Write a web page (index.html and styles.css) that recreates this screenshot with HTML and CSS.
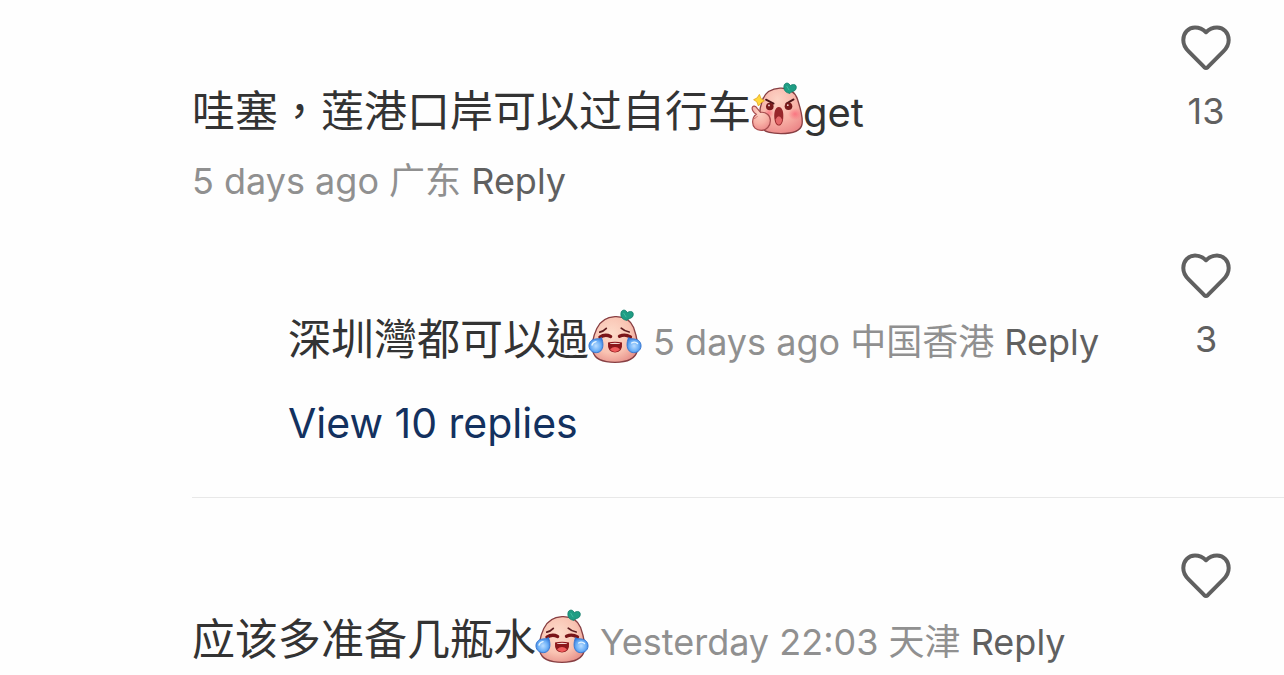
FILE: index.html
```html
<!DOCTYPE html>
<html lang="zh-Hant">
<head>
    <meta charset="UTF-8">
    <meta name="viewport" content="width=device-width, initial-scale=1.0">
    <title>Comments</title>
    <link rel="stylesheet" href="styles.css">
</head>
<body>
    <!-- Shared icons -->
    <svg class="sprite" aria-hidden="true">
        <defs>
            <radialGradient id="skin" cx="0.42" cy="0.38" r="0.7">
                <stop offset="0" stop-color="#fddccb"/>
                <stop offset="0.6" stop-color="#f9c3b2"/>
                <stop offset="1" stop-color="#e68e88"/>
            </radialGradient>
            <radialGradient id="skin-hot" cx="0.42" cy="0.25" r="0.85">
                <stop offset="0" stop-color="#fcd3c5"/>
                <stop offset="0.55" stop-color="#f8b1a6"/>
                <stop offset="1" stop-color="#ea8083"/>
            </radialGradient>
            <radialGradient id="blush">
                <stop offset="0" stop-color="#fb5f73" stop-opacity="0.7"/>
                <stop offset="1" stop-color="#fb5f73" stop-opacity="0"/>
            </radialGradient>
            <radialGradient id="tear" cx="0.5" cy="0.55" r="0.6">
                <stop offset="0" stop-color="#b9dcff"/>
                <stop offset="0.55" stop-color="#6fb2f8"/>
                <stop offset="1" stop-color="#2f78dc"/>
            </radialGradient>
        </defs>
        <symbol id="heart" viewBox="0 0 50 46">
            <path d="M25 7.2C21.6 3.9 17.8 2.5 14 2.5C7.2 2.5 2.3 8 2.3 15C2.3 19.6 4 22.8 7.6 26.4L23.3 42.2Q25 43.8 26.7 42.2L42.4 26.4C46 22.8 47.7 19.6 47.7 15C47.7 8 42.8 2.5 36 2.5C32.2 2.5 28.4 3.9 25 7.2Z" fill="none" stroke="#606060" stroke-width="4" stroke-linejoin="round"/>
        </symbol>
        <symbol id="leaf" viewBox="0 0 14 12">
            <path d="M4.6 10.8C1.4 9.6 0.5 6.6 1 3.8C1.3 1.2 4.4 0.2 6.2 2L7.3 3.6C9.2 2.2 11.8 2 12.9 3.6C13.8 5.4 13.2 8.4 10.6 9.2C9 9.8 8.2 10 7 11.4Z" fill="#1f9d84" stroke="#147d6b" stroke-width="0.8"/>
            <path d="M3.6 4L6.2 8.2" fill="none" stroke="#3dbb9f" stroke-width="1"/>
        </symbol>
        <symbol id="laugh-cry" viewBox="0 0 54 54">
            <path d="M27 7.6C36.5 7.2 42.6 11 45.6 18.5C48.2 26 50.8 35 49.2 42C47 51 37.5 53.3 27 53.3C16.5 53.3 7 51 4.9 42.5C3.4 35.5 5.6 26.5 8.8 19.5C12.4 11.8 18 8 27 7.6Z" fill="url(#skin)" stroke="#873f43" stroke-width="1.3"/>
            <use href="#leaf" x="32" y="0" width="14" height="12"/>
            <path d="M11.8 23.2Q15.5 22.3 18.3 19.4M33.2 19.2Q36.5 22.2 41.2 23" fill="none" stroke="#5e1d20" stroke-width="1.7" stroke-linecap="round"/>
            <path d="M12 28.2Q17 24.6 22.6 27.4M31.5 27.3Q37 24.6 42.4 28" fill="none" stroke="#7a1519" stroke-width="3.4" stroke-linecap="round"/>
            <path d="M20 33.6Q27 32 34 33.6Q35 43.3 27 43.6Q19.1 43.3 20 33.6Z" fill="#8c171b"/>
            <path d="M22 34.3Q27 33.4 32 34.3L31.6 35.1H22.4Z" fill="#f3d9d5"/>
            <path d="M22 40.2Q27 36 32 40.2Q30 43 27 43Q24 43 22 40.2Z" fill="#ef5b5b"/>
            <path d="M13.5 28.6C15.5 34 15.6 38.8 12.8 41.9C9.5 45 3.8 43.9 1.7 40C-0.4 35.8 2 31 6.3 30.2C9.3 29.6 11.6 30.2 13.5 28.6Z" fill="url(#tear)" stroke="#3475cf" stroke-width="0.9"/>
            <path d="M40.5 28.6C38.5 34 38.4 38.8 41.2 41.9C44.5 45 50.2 43.9 52.3 40C54.4 35.8 52 31 47.7 30.2C44.7 29.6 42.4 30.2 40.5 28.6Z" fill="url(#tear)" stroke="#3475cf" stroke-width="0.9"/>
            <path d="M4 36Q5 33 8 32.6M43.6 34Q47 32 49.5 34.6" fill="none" stroke="#e4f4ff" stroke-width="1.4" stroke-linecap="round"/>
        </symbol>
        <symbol id="shout" viewBox="0 0 54 54">
            <path d="M30 7.2C39.5 6.8 45 10.8 47.6 18.5C50 26.5 53.4 36 52 43.5C50.4 51 42 52.6 31 52.6C20 52.6 11.5 51 10.2 44C8.8 36 10 25.5 12.6 18.5C15.6 11 21.5 7.6 30 7.2Z" fill="url(#skin-hot)" stroke="#873f43" stroke-width="1.3"/>
            <use href="#leaf" x="33" y="1" width="14" height="12"/>
            <ellipse cx="45" cy="33" rx="7" ry="6" fill="url(#blush)"/>
            <ellipse cx="19" cy="32" rx="5" ry="5" fill="url(#blush)"/>
            <path d="M16 18.6L23.6 22.6M43.6 18.4L36.4 22.6" fill="none" stroke="#4d1519" stroke-width="1.8" stroke-linecap="round"/>
            <circle cx="19.8" cy="25.5" r="3.8" fill="#781a1c"/>
            <circle cx="38.5" cy="25.2" r="3.8" fill="#781a1c"/>
            <circle cx="19" cy="24.4" r="0.9" fill="#f6dcd8"/>
            <circle cx="37.8" cy="24.2" r="0.9" fill="#f6dcd8"/>
            <path d="M28.8 26C32.6 26 33.8 31.8 33.2 37.5C32.7 42.3 31 44.6 28.8 44.6C26.5 44.6 24.9 42 24.4 37.5C23.8 31.8 25.1 26 28.8 26Z" fill="#97262a"/>
            <path d="M25.6 38.5Q28.8 32 32.1 38.5Q31.5 43.6 28.8 43.7Q26.1 43.6 25.6 38.5Z" fill="#e5686a"/>
            <path d="M6.2 33.3C4.2 31.7 1.7 28.4 2.3 26.4C3 24.2 5.6 25 7.2 27.3L10.5 31.3C16 30.8 20.4 34.2 20.4 39.5C20.4 45 16.5 49.4 11.3 49.4C6 49.4 2.6 46 2.6 41C2.6 37.5 4 35 6.2 33.3Z" fill="url(#skin-hot)" stroke="#a74c4e" stroke-width="1.2"/>
            <path d="M3.4 38Q6.4 37 7.6 35" fill="none" stroke="#c9706c" stroke-width="0.9"/>
            <path d="M9.4 13.4L11 17.6L14.4 19.8L11 21.8L8.4 25L6.8 20.8L3.6 18.7L7 17Z" fill="#ffd83d" stroke="#e5a51b" stroke-width="0.8"/>
        </symbol>
    </svg>

    <main class="comments">
        <section class="thread">
            <article class="comment">
                <div class="comment-body">
                    <p class="text">哇塞，莲港口岸可以过自行车<svg class="emoji" role="img" aria-label="shout"><use href="#shout"/></svg><span class="latin">get</span></p>
                    <p class="meta">5 days ago 广东 <button type="button" class="reply">Reply</button></p>
                </div>
                <button type="button" class="like" aria-label="Like">
                    <svg class="heart"><use href="#heart"/></svg>
                    <span>13</span>
                </button>
            </article>

            <article class="comment nested">
                <div class="comment-body">
                    <p class="text">深圳灣都可以過<svg class="emoji" role="img" aria-label="laugh cry"><use href="#laugh-cry"/></svg> <span class="meta">5 days ago 中国香港 <button type="button" class="reply">Reply</button></span></p>
                    <a href="#" class="view-replies">View 10 replies</a>
                </div>
                <button type="button" class="like" aria-label="Like">
                    <svg class="heart"><use href="#heart"/></svg>
                    <span>3</span>
                </button>
            </article>
        </section>

        <section class="thread">
            <article class="comment">
                <div class="comment-body">
                    <p class="text">应该多准备几瓶水<svg class="emoji" role="img" aria-label="laugh cry"><use href="#laugh-cry"/></svg> <span class="meta">Yesterday 22:03 天津 <button type="button" class="reply">Reply</button></span></p>
                </div>
                <button type="button" class="like" aria-label="Like">
                    <svg class="heart"><use href="#heart"/></svg>
                </button>
            </article>
        </section>
    </main>
</body>
</html>
```
FILE: styles.css
```css
:root {
    --text: #333333;
    --muted: #909090;
    --action: #606060;
    --link: #13315f;
    --line: #e8e8e8;
}

* {
    box-sizing: border-box;
    margin: 0;
    padding: 0;
}

body {
    background-color: #fefefe;
    color: var(--text);
    font-family: Inter, "Noto Sans CJK TC", sans-serif;
}

button {
    background: none;
    border: none;
    font: inherit;
    color: var(--action);
    cursor: pointer;
}

.sprite {
    position: absolute;
    width: 0;
    height: 0;
}

.comments {
    padding-left: 192px;
}

.thread {
    padding-top: 25px;
}

.thread:first-child {
    padding-bottom: 46px;
}

.thread + .thread {
    border-top: 1px solid var(--line);
    padding-top: 55px;
}

.comment {
    display: flex;
    align-items: flex-start;
    justify-content: space-between;
    padding-right: 48px;
    min-height: 120px;
}

.comment-body {
    padding-top: 56px;
}

.nested {
    padding-left: 96px;
    margin-top: 48px;
}

.text {
    font-size: 43px;
    line-height: 60px;
    white-space: nowrap;
}

.latin {
    font-size: 40px;
}

.emoji {
    width: 54px;
    height: 54px;
    margin: -6px -1px;
    vertical-align: -2px;
}

.meta {
    font-size: 36px;
    line-height: 48px;
    color: var(--muted);
}

.text + .meta {
    margin-top: 14px;
}

.view-replies {
    display: inline-block;
    margin-top: 26px;
    font-size: 41px;
    line-height: 56px;
    color: var(--link);
    text-decoration: none;
}

.like {
    display: flex;
    flex-direction: column;
    align-items: center;
    width: 60px;
    font-size: 36px;
    line-height: 48px;
}

.heart {
    width: 50px;
    height: 46px;
    margin-bottom: 16px;
}
```
